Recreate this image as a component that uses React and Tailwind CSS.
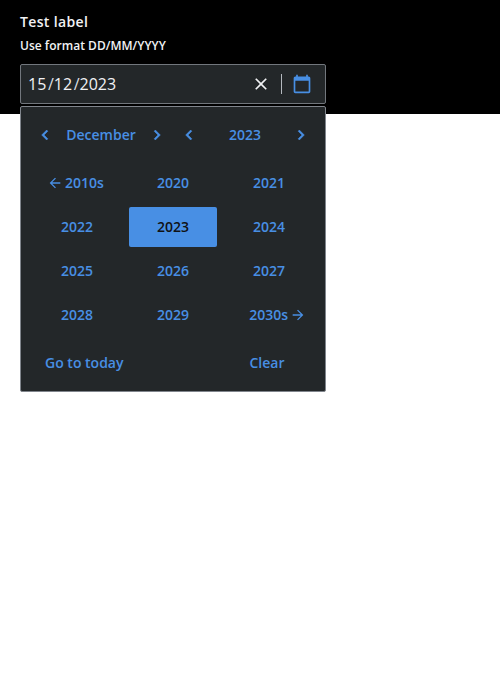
function Icon({ d, size = 16, bold = false }) {
  return (
    <svg
      width={size}
      height={size}
      viewBox="0 0 24 24"
      fill="currentColor"
      stroke={bold ? "currentColor" : "none"}
      strokeWidth="0.6"
      className="shrink-0"
      aria-hidden="true"
    >
      <path d={d} />
    </svg>
  );
}

const chevronLeft = "M15.41 7.41 14 6l-6 6 6 6 1.41-1.41L10.83 12z";
const chevronRight = "M10 6 8.59 7.41 13.17 12l-4.58 4.59L10 18l6-6z";
const arrowLeft = "M20 11H7.83l5.59-5.59L12 4l-8 8 8 8 1.41-1.41L7.83 13H20v-2z";
const arrowRight = "m12 4-1.41 1.41L16.17 11H4v2h12.17l-5.58 5.59L12 20l8-8z";
const close = "M19 6.41 17.59 5 12 10.59 6.41 5 5 6.41 10.59 12 5 17.59 6.41 19 12 13.41 17.59 19 19 17.59 13.41 12z";
const calendar = "M20 3h-1V1h-2v2H7V1H5v2H4c-1.1 0-2 .9-2 2v16c0 1.1.9 2 2 2h16c1.1 0 2-.9 2-2V5c0-1.1-.9-2-2-2zm0 18H4V8h16v13z";

function Stepper({ label }) {
  return (
    <div className="flex h-10 w-[136px] items-center justify-between">
      <button className="flex h-10 w-6 items-center justify-center"><Icon d={chevronLeft} size={20} bold /></button>
      <span>{label}</span>
      <button className="flex h-10 w-6 items-center justify-center"><Icon d={chevronRight} size={20} bold /></button>
    </div>
  );
}

const years = ["2020", "2021", "2022", "2023", "2024", "2025", "2026", "2027", "2028", "2029"];

export default function App() {
  return (
    <div className="h-[700px] bg-white font-['Open_Sans',sans-serif]">
      <div className="h-[114px] bg-black px-5 pt-3 text-[#f1f2f4]">
        <div className="h-5 text-sm leading-5 font-semibold tracking-wide">Test label</div>
        <div className="mt-[5px] h-[18px] text-xs leading-[18px] font-semibold tracking-[0.02px]">Use format DD/MM/YYYY</div>
        <div className="mt-[9px] flex h-10 w-[306px] items-center rounded-xs border border-[#72777d] bg-[#232729] pl-[7px]">
          <div className="flex flex-1 text-base leading-6">
            <span>15</span>
            <span className="ml-[1.6px] w-[5.9px] text-[#dcdfe2]">/</span>
            <span>12</span>
            <span className="ml-[1.6px] w-[5.9px] text-[#dcdfe2]">/</span>
            <span>2023</span>
          </div>
          <button className="mr-[10px] flex"><Icon d={close} size={20} /></button>
          <div className="h-5 w-px bg-[#b4b9bf]" />
          <button className="mr-[13px] ml-[10px] flex text-[#488fe4]"><Icon d={calendar} size={20} /></button>
        </div>
        <div className="mt-0.5 h-[286px] w-[306px] rounded-xs border border-[#80858c] bg-[#232729] px-3 py-2 text-sm font-semibold text-[#488fe4]">
          <div className="flex gap-2">
            <Stepper label="December" />
            <Stepper label="2023" />
          </div>
          <div className="mt-2 grid grid-cols-3 gap-x-2 gap-y-1">
            <button className="flex h-10 items-center justify-center gap-0.5 pr-[3px]"><Icon d={arrowLeft} />2010s</button>
            {years.map((year) => (
              <button key={year} className={`h-10 rounded-xs ${year === "2023" ? "bg-[#488fe4] text-[#101214]" : ""}`}>{year}</button>
            ))}
            <button className="flex h-10 items-center justify-end gap-0.5 pr-[7px]">2030s<Icon d={arrowRight} /></button>
          </div>
          <div className="mt-2 flex h-10 items-center justify-between pr-[28.5px] pl-3">
            <button>Go to today</button>
            <button>Clear</button>
          </div>
        </div>
      </div>
    </div>
  );
}
